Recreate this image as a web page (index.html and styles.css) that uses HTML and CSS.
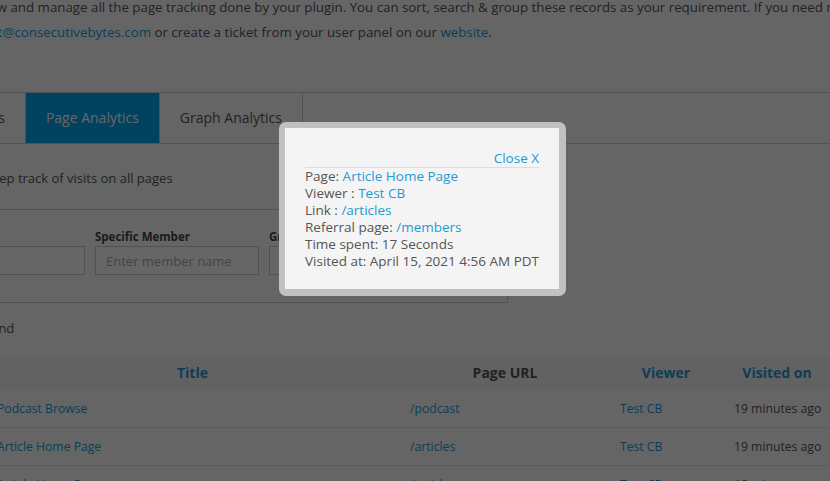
FILE: index.html
```html
<!DOCTYPE html>
<html lang="en">
<head>
    <meta charset="UTF-8">
    <title>Page Analytics</title>
    <link rel="stylesheet" href="styles.css">
</head>
<body>
    <div class="wrap">
        <p class="intro">Here you can view and manage all the page tracking done by your plugin. You can sort, search &amp; group these records as your requirement. If you need more help, write to<br>us at <a href="#">support@consecutivebytes.com</a> or create a ticket from your user panel on our <a href="#">website</a>.</p>

        <div class="tabs">
            <div class="tab">Member Analytics</div>
            <div class="tab active">Page Analytics</div>
            <div class="tab">Graph Analytics</div>
        </div>

        <p class="desc">Keep track of visits on all pages</p>

        <div class="filters">
            <div class="field">
                <label>Page</label>
                <input type="text" placeholder="">
            </div>
            <div class="field">
                <label>Specific Member</label>
                <input type="text" placeholder="Enter member name">
            </div>
            <div class="field">
                <label>Group by</label>
                <input type="text">
            </div>
        </div>

        <p class="found">Records found</p>

        <table class="records">
            <thead>
                <tr>
                    <th class="col-title"><a href="#">Title</a></th>
                    <th class="col-url">Page URL</th>
                    <th class="col-viewer"><a href="#">Viewer</a></th>
                    <th class="col-date"><a href="#">Visited on</a></th>
                </tr>
            </thead>
            <tbody>
                <tr>
                    <td><a href="#">Podcast Browse</a></td>
                    <td><a href="#">/podcast</a></td>
                    <td><a href="#">Test CB</a></td>
                    <td>19 minutes ago</td>
                </tr>
                <tr>
                    <td><a href="#">Article Home Page</a></td>
                    <td><a href="#">/articles</a></td>
                    <td><a href="#">Test CB</a></td>
                    <td>19 minutes ago</td>
                </tr>
                <tr>
                    <td><a href="#">Article Home Page</a></td>
                    <td><a href="#">/articles</a></td>
                    <td><a href="#">Test CB</a></td>
                    <td>19 minutes ago</td>
                </tr>
            </tbody>
        </table>
    </div>

    <div class="overlay"></div>

    <div class="popup">
        <div class="popup-body">
            <div class="popup-close"><a href="#">Close X</a></div>
            <div>Page: <a href="#">Article Home Page</a></div>
            <div>Viewer : <a href="#">Test CB</a></div>
            <div>Link : <a href="#">/articles</a></div>
            <div>Referral page: <a href="#">/members</a></div>
            <div>Time spent: 17 Seconds</div>
            <div>Visited at: April 15, 2021 4:56 AM PDT</div>
        </div>
    </div>
</body>
</html>
```

FILE: styles.css
```css
body {
    margin: 0;
    background: #fdfdfd;
    font-family: 'Open Sans', 'DejaVu Sans', sans-serif;
    font-size: 13px;
    color: #555;
    overflow: hidden;
}

a {
    color: #1e9ad6;
    text-decoration: none;
}

.wrap {
    margin: -5px 0 0 -130px;
}

.intro {
    margin: 0 0 47px;
    padding-left: 50px;
    text-indent: -26px;
    font-size: 13.3px;
    line-height: 25px;
    white-space: nowrap;
}

.tabs {
    display: flex;
    margin-left: -2px;
    border-top: 1px solid #ccc;
    border-bottom: 1px solid #ccc;
}

.tab {
    padding: 0 20px;
    line-height: 50px;
    font-size: 14px;
    border-right: 1px solid #ccc;
}

.tab.active {
    background: #00a6ed;
    color: #fff;
}

.desc {
    margin: 24px 0 21px 114px;
    line-height: 20px;
}

.filters {
    display: flex;
    gap: 10px;
    width: 605px;
    margin-left: 33px;
    padding: 19px 16px 27px 17px;
    box-sizing: border-box;
    border: 1px solid #ccc;
}

.field label {
    display: block;
    margin-bottom: 1px;
    font-size: 11.5px;
    font-weight: bold;
    line-height: 16px;
    color: #444;
}

.field input {
    width: 164px;
    height: 29px;
    box-sizing: border-box;
    padding: 0 10px;
    border: 1px solid #ccc;
    background: #fff;
    font: inherit;
}

.field input::placeholder {
    color: #aaa;
}

.found {
    margin: 15px 0 17px 56px;
    line-height: 20px;
}

.records {
    width: 847px;
    margin-left: 115px;
    border-collapse: collapse;
    table-layout: fixed;
}

.col-title { width: 415px; }
.col-url { width: 210px; }
.col-viewer { width: 112px; }
.col-date { width: 110px; }

.records th {
    height: 35px;
    padding: 0;
    background: #f4f4f4;
    font-size: 14px;
    text-align: center;
    color: #555;
}

.records td {
    height: 37px;
    padding: 0 10px;
    border-bottom: 1px solid #e6e6e6;
    font-size: 12.2px;
    white-space: nowrap;
}

.records td:first-child {
    padding-left: 12px;
}

.records td:last-child {
    padding-left: 12px;
}

.overlay {
    position: fixed;
    top: 0;
    left: 0;
    right: 0;
    bottom: 0;
    background: rgba(0, 0, 0, 0.6);
}

.popup {
    position: fixed;
    top: 122px;
    left: 279px;
    padding: 6px 7px 7px 6px;
    background: #c1c1c1;
    border-radius: 7px;
}

.popup-body {
    padding: 21px 20px 19px;
    background: #f4f4f4;
    font-size: 13.5px;
    line-height: 17px;
    color: #555;
    white-space: nowrap;
}

.popup-close {
    text-align: right;
    line-height: 18px;
    border-bottom: 1px solid #ddd;
}
```
